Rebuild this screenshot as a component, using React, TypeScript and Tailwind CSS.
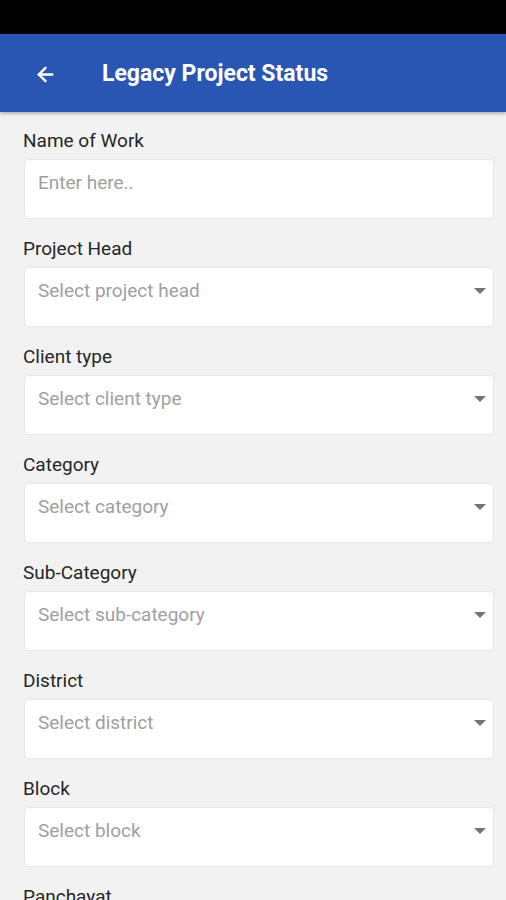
import { ArrowLeft } from "lucide-react";

const fields = [
  { label: "Name of Work", placeholder: "Enter here..", select: false },
  { label: "Project Head", placeholder: "Select project head", select: true },
  { label: "Client type", placeholder: "Select client type", select: true },
  { label: "Category", placeholder: "Select category", select: true },
  { label: "Sub-Category", placeholder: "Select sub-category", select: true },
  { label: "District", placeholder: "Select district", select: true },
  { label: "Block", placeholder: "Select block", select: true },
  { label: "Panchayat", placeholder: "Select panchayat", select: true },
];

export default function App() {
  return (
    <div className="h-[900px] overflow-hidden bg-[#f2f2f2]" style={{ fontFamily: "Roboto, 'Noto Sans', sans-serif" }}>
      <div className="h-[34px] bg-black" />

      {/* App bar */}
      <header className="h-[78px] bg-[#2a56b3] flex items-center pt-[2px] shadow-[0_2px_3px_rgba(0,0,0,0.25)] relative">
        <ArrowLeft className="ml-[34px] text-white" size={23} strokeWidth={2.5} />
        <h1 className="ml-[45px] text-white text-[23px] font-bold">Legacy Project Status</h1>
      </header>

      <main className="pl-[24px] pr-[12px] pt-[16px]">
        {fields.map((f) => (
          <div key={f.label} className="mb-[17px]">
            <label className="block text-[19px] leading-[26px] text-[#262626] -ml-px">{f.label}</label>
            <div className="mt-[5px] h-[60px] bg-white rounded-[4px] border border-[#e6e6e6] flex items-start pt-[11px] pl-[13px] pr-[7px]">
              <span className="flex-1 text-[19px] leading-[24px] text-[#a0a0a0]">{f.placeholder}</span>
              {f.select && (
                <svg width="12" height="7" viewBox="0 0 12 7" className="mt-[9px]">
                  <path d="M0 0 L12 0 L6 6 Z" fill="#757575" />
                </svg>
              )}
            </div>
          </div>
        ))}
      </main>
    </div>
  );
}
